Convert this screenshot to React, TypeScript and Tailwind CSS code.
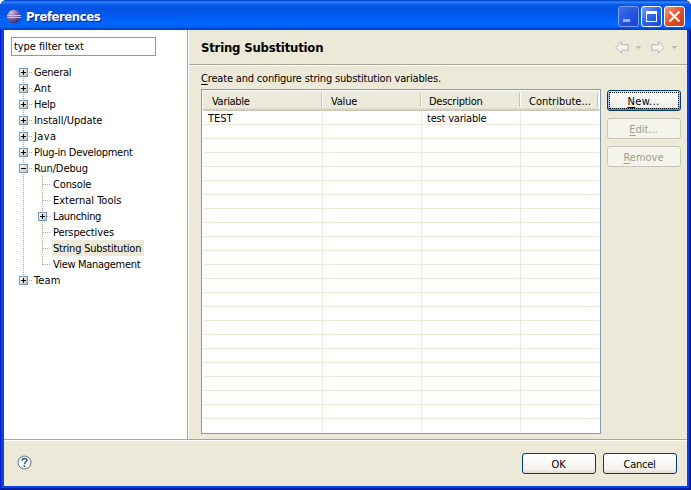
import React from 'react';

type Node = { label: string; level: 0 | 1; box?: '+' | '-'; selected?: boolean; w: string };

const nodes: Node[] = [
  { label: 'General', level: 0, box: '+', w: 'tracking-[-0.25px]' },
  { label: 'Ant', level: 0, box: '+', w: 'tracking-[0.1px]' },
  { label: 'Help', level: 0, box: '+', w: 'tracking-[-0.3px]' },
  { label: 'Install/Update', level: 0, box: '+', w: 'tracking-[-0.05px]' },
  { label: 'Java', level: 0, box: '+', w: 'tracking-[0.4px]' },
  { label: 'Plug-in Development', level: 0, box: '+', w: 'tracking-[-0.27px]' },
  { label: 'Run/Debug', level: 0, box: '-', w: 'tracking-[-0.1px]' },
  { label: 'Console', level: 1, w: 'tracking-[-0.15px]' },
  { label: 'External Tools', level: 1, w: 'tracking-[0px]' },
  { label: 'Launching', level: 1, box: '+', w: 'tracking-[-0.35px]' },
  { label: 'Perspectives', level: 1, w: 'tracking-[-0.12px]' },
  { label: 'String Substitution', level: 1, selected: true, w: 'tracking-[-0.22px]' },
  { label: 'View Management', level: 1, w: 'tracking-[-0.3px]' },
  { label: 'Team', level: 0, box: '+', w: 'tracking-[0.1px]' },
];

function Box({ kind, x }: { kind: '+' | '-'; x: number }) {
  return (
    <g transform={`translate(${x} 4)`} shapeRendering="crispEdges">
      <rect x="0.5" y="0.5" width="8" height="8" fill="url(#box)" stroke="#7898b5" />
      <path d={kind === '+' ? 'M2 4.5h5M4.5 2v5' : 'M2 4.5h5'} stroke="#000" />
    </g>
  );
}

function TreeRow({ node, index }: { node: Node; index: number }) {
  const first = index === 0;
  const last = index === nodes.length - 1;
  const lastChild = node.label === 'View Management';
  const child = node.level === 1;
  return (
    <div className="flex h-4 items-center">
      <svg width={child ? 33 : 14} height="16" className="shrink-0" shapeRendering="crispEdges">
        <g stroke="#aca899" strokeDasharray="1 1">
          <path d={first ? 'M4.5 8v8' : last ? 'M4.5 0v9' : 'M4.5 0v16'} />
          {child ? (
            <>
              <path d={lastChild ? 'M23.5 0v9' : 'M23.5 0v16'} />
              <path d="M24 8.5h8" />
            </>
          ) : (
            <path d="M10 8.5h4" />
          )}
        </g>
        {node.box && <Box kind={node.box} x={child ? 19 : 0} />}
      </svg>
      <span
        className={`h-4 whitespace-nowrap pl-px leading-[18px] ${node.w} ${
          node.selected ? 'w-[92px] bg-[#ece9d8]' : ''
        }`}
      >
        {node.label}
      </span>
    </div>
  );
}

function Button({ label, mnemonic, state }: { label: string; mnemonic?: boolean; state?: 'focus' | 'off' }) {
  const look =
    state === 'off'
      ? 'border-[#c9c7ba] bg-[#f5f4ea] text-[#a1a192]'
      : state === 'focus'
        ? 'border-[#003c74] bg-gradient-to-b from-white to-[#ecebe5] text-black shadow-[inset_0_1px_0_#cee7ff,inset_0_-2px_0_#6982ee,inset_2px_0_0_#a3bff5,inset_-2px_0_0_#a3bff5]'
        : 'border-[#003c74] bg-[linear-gradient(to_bottom,#ffffff,#f3f2ec_80%,#dfdbd0)] text-black';
  const spacing =
    label === 'New...'
      ? 'tracking-[0.35px]'
      : label === 'OK' || label === 'Cancel'
        ? 'tracking-[-0.25px]'
        : 'tracking-[0px]';
  return (
    <button
      className={`relative flex h-[21px] w-[74px] shrink-0 items-center justify-center rounded-[3px] border pr-px pt-[2px] ${look}`}
    >
      {state === 'focus' && <span className="absolute inset-x-[1px] inset-y-[1px] border border-dotted border-black" />}
      <span className={spacing}>
        {mnemonic ? <span className="underline underline-offset-2">{label[0]}</span> : label[0]}
        {label.slice(1)}
      </span>
    </button>
  );
}

function Caption({ kind }: { kind: 'min' | 'max' | 'close' }) {
  const look =
    kind === 'close'
      ? 'border-white bg-gradient-to-br from-[#f09a80] via-[#e3502a] to-[#c83a14]'
      : kind === 'max'
        ? 'border-white bg-gradient-to-br from-[#6f9bf8] via-[#2b62ea] to-[#1746cf]'
        : 'border-[#7f9bea] bg-gradient-to-br from-[#3e73ec] via-[#2358df] to-[#1945cc]';
  return (
    <div className={`flex h-[21px] w-[21px] items-center justify-center rounded-[3px] border ${look}`}>
      <svg width="19" height="19" shapeRendering={kind === 'close' ? 'auto' : 'crispEdges'}>
        {kind === 'min' && <path d="M4 12h7v3H4z" fill="#98b0f2" />}
        {kind === 'max' && (
          <>
            <path d="M4 4h11v3H4z" fill="#fff" />
            <rect x="4.5" y="5.5" width="10" height="9" fill="none" stroke="#fff" />
          </>
        )}
        {kind === 'close' && <path d="M4.5 4.5l10 10M14.5 4.5l-10 10" stroke="#fff" strokeWidth="2.2" />}
      </svg>
    </div>
  );
}

function Arrow({ flip }: { flip?: boolean }) {
  return (
    <svg width="14" height="13" viewBox="0 0 14 13" className={flip ? '-scale-x-100' : ''}>
      <path d="M.7 6.5L6.5.8v3h6.8v5.4H6.5v3z" fill="#f5f4ef" stroke="#b8b6ae" />
    </svg>
  );
}

function Drop() {
  return (
    <svg width="5" height="3" shapeRendering="crispEdges">
      <path d="M0 0h5v1H4v1H3v1H2V2H1V1H0z" fill="#bbb9b0" />
    </svg>
  );
}

const grid = 'grid grid-cols-[120px_99px_99px_78px]';
const headers = [
  ['Variable', 'pl-[9px] tracking-[-0.3px]'],
  ['Value', 'pl-2 tracking-[-0.2px]'],
  ['Description', 'pl-[7px] tracking-[-0.25px]'],
  ['Contribute...', 'pl-2 tracking-[0px]'],
];

export default function App() {
  return (
    <div className="flex h-[490px] w-[691px] flex-col overflow-hidden bg-white font-['DejaVu_Sans_Condensed','DejaVu_Sans',sans-serif] text-[11px] leading-4 text-black [font-stretch:condensed]">
      <div className="flex h-full flex-col rounded-t-[7px] bg-[#0a44e0] shadow-[inset_1px_0_0_#0019cf,inset_-1px_0_0_#00138c,inset_-2px_0_0_#0025ad,inset_0_-1px_0_#00138c,inset_0_-2px_0_#0025ad]">
        <header className="flex h-[30px] shrink-0 items-center rounded-t-[7px] bg-[linear-gradient(to_bottom,#0844c8_0px,#0a50d8_1px,#3490ff_2px,#1c72f4_3px,#0458e8_5px,#0054e0_9px,#0058ec_14px,#0062fb_21px,#0066ff_25px,#005ff2_27px,#0046d0_29px,#003ebc_30px)] pl-[6px] pr-[6px] pt-[3px]">
          <svg width="16" height="16" viewBox="0 0 16 16" className="mr-1 shrink-0">
            <defs>
              <radialGradient id="orb" cx=".3" cy=".2" r=".9">
                <stop offset="0" stopColor="#d3c0d8" />
                <stop offset=".5" stopColor="#7c68a8" />
                <stop offset="1" stopColor="#2c2068" />
              </radialGradient>
              <linearGradient id="box" x1="0" y1="0" x2="1" y2="1">
                <stop offset="0" stopColor="#fff" />
                <stop offset="1" stopColor="#c7bfb3" />
              </linearGradient>
            </defs>
            <circle cx="8" cy="7.5" r="6.8" fill="url(#orb)" />
            <path d="M1 6.5h14M1 8.5h14" stroke="#c3c6ec" strokeWidth="1" />
          </svg>
          <h1 className="pt-px text-[13px] font-bold tracking-[-0.45px] text-white [text-shadow:1px_1px_0_#0a1883]">
            Preferences
          </h1>
          <div className="ml-auto flex gap-[2px]">
            <Caption kind="min" />
            <Caption kind="max" />
            <Caption kind="close" />
          </div>
        </header>

        <div className="mx-[4px] mb-[4px] flex min-h-0 flex-1 flex-col bg-[#ece9d8]">
          <div className="flex h-[409px] shrink-0">
            <aside className="w-[184px] shrink-0 border-r border-[#aca899] bg-white">
              <div className="ml-[7px] mt-[7px] flex h-[19px] w-[145px] items-center border border-[#7f9db9] pl-[2px] pt-px tracking-[-0.07px]">
                type filter text
              </div>
              <div className="mt-2 pl-[15px]">
                {nodes.map((n, i) => (
                  <TreeRow key={n.label} node={n} index={i} />
                ))}
              </div>
            </aside>
            <main className="flex min-w-0 flex-1 flex-col border-l border-white">
              <div className="flex h-9 shrink-0 items-center border-b border-white pl-3 pr-[10px] shadow-[inset_0_-1px_0_#aca899]">
                <h2 className="pt-px text-[13px] font-bold tracking-[-0.2px]">String Substitution</h2>
                <div className="ml-auto flex items-center">
                  <Arrow />
                  <span className="ml-[7px] flex"><Drop /></span>
                  <span className="ml-[10px] flex"><Arrow flip /></span>
                  <span className="ml-[7px] flex"><Drop /></span>
                </div>
              </div>
              <p className="ml-3 mt-[5px] h-[18px] whitespace-nowrap tracking-[-0.175px]">
                <span className="underline underline-offset-2">C</span>reate and configure string substitution variables.
              </p>
              <div className="flex pl-3">
                <div className="h-[345px] w-[400px] border border-[#7f9db9] bg-white p-px">
                  <div className={`${grid} h-5 bg-[linear-gradient(to_bottom,#ebeadb_0_17px,#e2decd_17px_18px,#d6d2c2_18px_19px,#cbc7b8_19px)] pt-[2px]`}>
                    {headers.map(([h, c]) => (
                      <div
                        key={h}
                        className={`mr-[1px] h-[14px] whitespace-nowrap border-r border-[#c7c5b2] leading-[17px] shadow-[1px_0_0_#fff] ${c}`}
                      >
                        {h}
                      </div>
                    ))}
                  </div>
                  {Array.from({ length: 23 }, (_, r) => (
                    <div key={r} className={`${grid} h-[14px] ${r < 22 ? 'border-b' : ''} border-[#ece9d8] leading-[15px]`}>
                      {['TEST', '', 'test variable', ''].map((t, c) => (
                        <div
                          key={c}
                          className={`h-[13px] whitespace-nowrap pl-[5px] ${c === 2 ? 'tracking-[-0.2px]' : ''} ${c < 3 ? 'border-r border-[#ece9d8]' : ''}`}
                        >
                          {r === 0 ? t : ''}
                        </div>
                      ))}
                    </div>
                  ))}
                </div>
                <div className="ml-[6px] mt-px flex flex-col gap-[7px]">
                  <Button label="New..." mnemonic state="focus" />
                  <Button label="Edit..." mnemonic state="off" />
                  <Button label="Remove" mnemonic state="off" />
                </div>
              </div>
            </main>
          </div>
          <footer className="flex flex-1 items-start border-t border-[#aca899] pl-[13px] pr-[10px] pt-[13px] shadow-[inset_0_1px_0_#fff]">
            <svg width="15" height="15" viewBox="0 0 15 15" className="mt-[2px]">
              <circle cx="7.5" cy="7.5" r="6.5" fill="#f7fafc" stroke="#5c7691" />
              <path d="M5.2 5.7c0-3 4.8-2.9 4.7-.2C9.9 7 7.5 7.1 7.5 9.2" fill="none" stroke="#3c5a80" strokeWidth="1.5" />
              <path d="M6.7 10.4h1.6V12H6.7z" fill="#3c5a80" />
            </svg>
            <div className="ml-auto flex gap-[7px]">
              <Button label="OK" />
              <Button label="Cancel" />
            </div>
          </footer>
        </div>
      </div>
    </div>
  );
}
